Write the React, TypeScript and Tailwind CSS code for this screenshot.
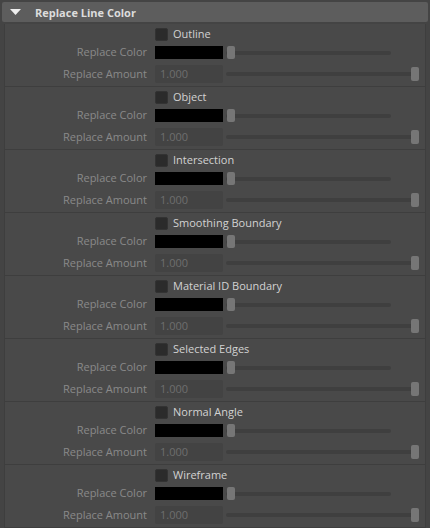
import React from 'react';

const groups = [
  'Outline',
  'Object',
  'Intersection',
  'Smoothing Boundary',
  'Material ID Boundary',
  'Selected Edges',
  'Normal Angle',
  'Wireframe',
];

function Group({ name }: { name: string }) {
  return (
    <div className="flex flex-col pt-[3px] pb-[3px] h-[63px] border-b border-[#3e3e3e]">
      {/* checkbox row */}
      <div className="flex items-center h-[14px]">
        <div className="w-[150px] shrink-0" />
        <div className="w-[13px] h-[13px] rounded-[2px] bg-[#2b2b2b] border border-[#333]" />
        <span className="ml-[5px] text-[11px] text-[#d2d2d2] leading-[12px] pb-[1px]">{name}</span>
      </div>

      {/* replace color */}
      <div className="flex items-center h-[13px] mt-[5px]">
        <div className="w-[142px] shrink-0 text-right text-[11px] text-[#8a8a8a] leading-[12px] pb-[1px]">Replace Color</div>
        <div className="ml-[8px] w-[68px] h-[13px] bg-black" />
        <div className="relative ml-[3px] w-[165px] h-[13px] flex items-center">
          <div className="w-full h-[4px] rounded-full bg-[#3f3f3f]" />
          <div className="absolute left-[1px] top-0 w-[8px] h-[13px] rounded-[2px] bg-[#767676]" />
        </div>
      </div>

      {/* replace amount */}
      <div className="flex items-center h-[18px] mt-[6px]">
        <div className="w-[142px] shrink-0 text-right text-[11px] text-[#8a8a8a] leading-[12px] pb-[1px]">Replace Amount</div>
        <div className="ml-[8px] w-[68px] h-[18px] rounded-[2px] bg-[#434343] flex items-center pl-[5px] text-[11px] text-[#6e6e6e]">
          1.000
        </div>
        <div className="relative ml-[3px] w-[193px] h-[14px] flex items-center">
          <div className="w-[188px] h-[4px] rounded-full bg-[#3f3f3f]" />
          <div className="absolute right-0 top-0 w-[8px] h-[14px] rounded-[2px] bg-[#767676]" />
        </div>
      </div>
    </div>
  );
}

export default function App() {
  return (
    <div
      className="w-[430px] h-[528px] overflow-hidden bg-[#444444] pt-[2px]"
      style={{ fontFamily: '"Open Sans", "Noto Sans", sans-serif' }}
    >
      {/* frame header */}
      <div className="mx-[2px] h-[20px] rounded-[2px] bg-[#5d5d5d] flex items-center">
        <svg width="11" height="6" viewBox="0 0 11 6" className="ml-[8px]">
          <polygon points="0,0 11,0 5.5,6" fill="#eeeeee" />
        </svg>
        <span className="ml-[14px] text-[11px] font-bold text-[#dcdcdc] leading-none">Replace Line Color</span>
      </div>

      {/* groups */}
      <div className="mt-[2px] mx-[4px] bg-[#494949] border-x border-[#3e3e3e]">
        {groups.map((g) => (
          <Group key={g} name={g} />
        ))}
      </div>
    </div>
  );
}
